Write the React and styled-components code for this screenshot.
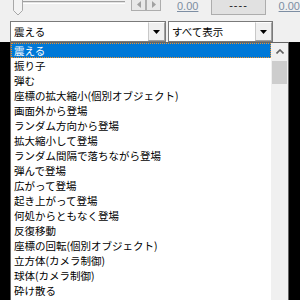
import React from "react";
import styled, { createGlobalStyle } from "styled-components";

const Global = createGlobalStyle`
  html, body { margin: 0; padding: 0; background: #f0f0f0; overflow: hidden; }
  #root { width: 300px; height: 300px; }
  * { box-sizing: border-box; }
`;

const Page = styled.div`
  width: 300px;
  height: 300px;
  display: flex;
  flex-direction: column;
  font-family: "Noto Sans CJK JP", "Noto Sans", sans-serif;
`;

const TopRow = styled.div`
  height: 21px;
  display: flex;
  align-items: flex-start;
`;

const Slider = styled.div`
  position: relative;
  width: 120px;
  margin-left: 8px;
  height: 21px;
`;

const Track = styled.div`
  margin: 1px 0 0 10px;
  width: 107px;
  height: 3px;
  border-top: 1px solid #a0a0a0;
  border-bottom: 1px solid #ffffff;
  background: #e3e3e3;
`;

const Thumb = styled.svg`
  position: absolute;
  left: 5px;
  top: -4px;
`;

const ArrowPair = styled.div`
  display: flex;
  margin: -3px 0 0 6px;
`;

const ArrowButton = styled.div`
  width: 15px;
  height: 14px;
  background: #e8e8e8;
  border: 1px solid #adadad;
  display: flex;
  align-items: center;
  justify-content: center;
  & + & { margin-left: 0; }
`;

const ValueLink = styled.span`
  margin: 0 0 0 ${(p) => p.$ml}px;
  font-family: "Liberation Sans", Arial, sans-serif;
  font-size: 11px;
  line-height: 12px;
  color: #7d8ea3;
  text-decoration: underline;
  white-space: nowrap;
`;

const DashButton = styled.div`
  margin: -6px 0 0 13px;
  width: 58px;
  height: 21px;
  background: #e1e1e1;
  border: 1px solid #adadad;
  display: flex;
  align-items: flex-end;
  justify-content: center;
  padding-bottom: 3px;
  font-family: "Liberation Sans", Arial, sans-serif;
  font-size: 11px;
  line-height: 11px;
  color: #202020;
  letter-spacing: 1px;
`;

const ComboRow = styled.div`
  height: 21px;
  display: flex;
  padding-left: 10px;
  gap: 2px;
`;

const Combo = styled.div`
  width: ${(p) => p.$w}px;
  height: 21px;
  background: #ffffff;
  border: 1px solid #7a7a7a;
  display: flex;
  align-items: stretch;
`;

const ComboText = styled.div`
  flex: 1;
  padding-left: 3px;
  font-size: 10.5px;
  line-height: 19px;
  color: #000;
  white-space: nowrap;
  overflow: hidden;
`;

const DropButton = styled.div`
  width: 17px;
  background: #f0f0f0;
  border-left: 1px solid #c8c8c8;
  border-top: 1px solid #ffffff;
  border-right: 1px solid #a0a0a0;
  border-bottom: 1px solid #a0a0a0;
  display: flex;
  align-items: center;
  justify-content: center;
`;

const Lower = styled.div`
  flex: 1;
  background: #000;
  display: flex;
  min-height: 0;
`;

const ListBox = styled.div`
  margin-left: 10px;
  width: 279px;
  height: 100%;
  background: #fff;
  border: 1px solid #646464;
  border-bottom: none;
  display: flex;
`;

const Items = styled.div`
  flex: 1;
  display: flex;
  flex-direction: column;
  overflow: hidden;
`;

const Item = styled.div`
  height: 15px;
  flex: none;
  padding-left: 3px;
  font-size: 10.5px;
  line-height: 15px;
  white-space: nowrap;
  color: ${(p) => (p.$sel ? "#ffffff" : "#000000")};
  background: ${(p) => (p.$sel ? "#0078d7" : "transparent")};
  border: 1px dotted ${(p) => (p.$sel ? "#f0922c" : "transparent")};
  padding-top: 0;
  display: flex;
  align-items: center;
  padding-left: 2px;
`;

const ScrollBar = styled.div`
  width: 17px;
  background: #f0f0f0;
  display: flex;
  flex-direction: column;
`;

const ScrollArrow = styled.div`
  height: 17px;
  display: flex;
  align-items: center;
  justify-content: center;
`;

const ScrollThumb = styled.div`
  margin: 1px 1px 0;
  height: 23px;
  background: #cdcdcd;
`;

const items = [
  "震える",
  "振り子",
  "弾む",
  "座標の拡大縮小(個別オブジェクト)",
  "画面外から登場",
  "ランダム方向から登場",
  "拡大縮小して登場",
  "ランダム間隔で落ちながら登場",
  "弾んで登場",
  "広がって登場",
  "起き上がって登場",
  "何処からともなく登場",
  "反復移動",
  "座標の回転(個別オブジェクト)",
  "立方体(カメラ制御)",
  "球体(カメラ制御)",
  "砕け散る",
];

const DownArrow = () => (
  <svg width="7" height="4" viewBox="0 0 7 4">
    <path d="M0 0H7L3.5 4Z" fill="#000" />
  </svg>
);

export default function App() {
  return (
    <Page>
      <Global />
      <TopRow>
        <Slider>
          <Track />
          <Thumb width="11" height="20" viewBox="0 0 11 20">
            <path d="M0.5 0.5H9.5V14.5L5 19L0.5 14.5Z" fill="#f3f3f3" stroke="#a8a8a8" />
          </Thumb>
        </Slider>
        <ArrowPair>
          <ArrowButton>
            <svg width="4" height="7" viewBox="0 0 4 7">
              <path d="M4 0V7L0 3.5Z" fill="#a0a0a0" />
            </svg>
          </ArrowButton>
          <ArrowButton>
            <svg width="4" height="7" viewBox="0 0 4 7">
              <path d="M0 0V7L4 3.5Z" fill="#a0a0a0" />
            </svg>
          </ArrowButton>
        </ArrowPair>
        <ValueLink $ml={16}>0.00</ValueLink>
        <DashButton>----</DashButton>
        <ValueLink $ml={13}>0.00</ValueLink>
      </TopRow>
      <ComboRow>
        <Combo $w={156}>
          <ComboText>震える</ComboText>
          <DropButton>
            <DownArrow />
          </DropButton>
        </Combo>
        <Combo $w={105}>
          <ComboText>すべて表示</ComboText>
          <DropButton>
            <DownArrow />
          </DropButton>
        </Combo>
      </ComboRow>
      <Lower>
        <ListBox>
          <Items>
            {items.map((t, i) => (
              <Item key={i} $sel={i === 0}>
                {t}
              </Item>
            ))}
          </Items>
          <ScrollBar>
            <ScrollArrow>
              <svg width="8" height="5" viewBox="0 0 8 5">
                <path d="M0.5 4.5L4 1L7.5 4.5" fill="none" stroke="#606060" strokeWidth="1.6" />
              </svg>
            </ScrollArrow>
            <ScrollThumb />
          </ScrollBar>
        </ListBox>
      </Lower>
    </Page>
  );
}
